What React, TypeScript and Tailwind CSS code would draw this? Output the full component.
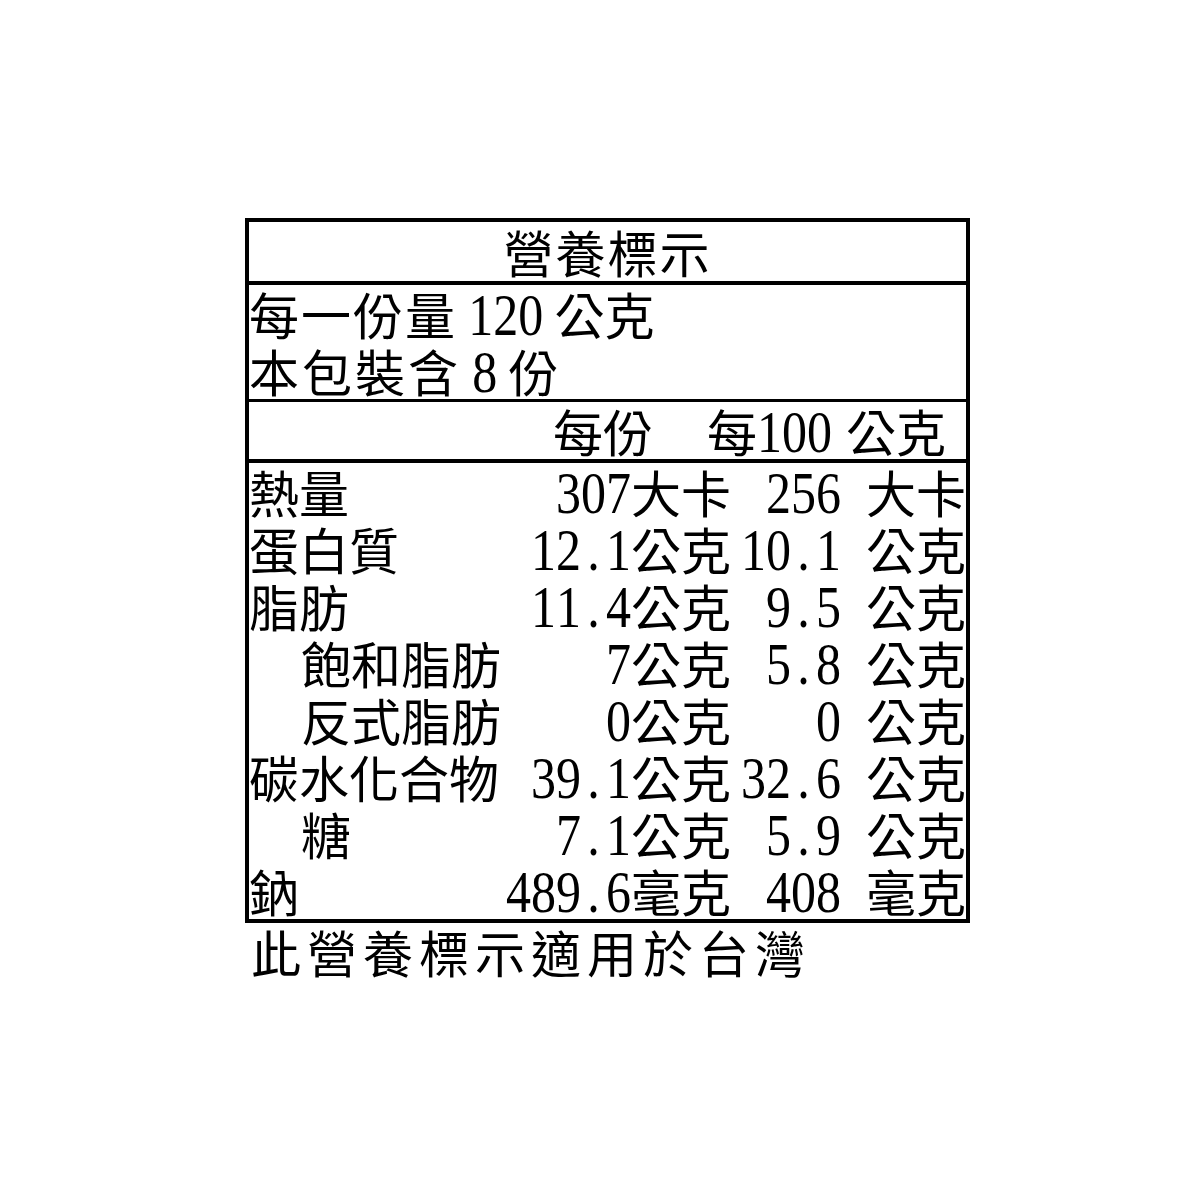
import React from "react";

const CJK = "font-['Noto_Sans_CJK_TC','Noto_Sans_CJK_SC',sans-serif]";

function Num({ v }: { v: string }) {
  return (
    <>
      {v.split("").map((c, i) => (
        <span
          key={i}
          className="inline-block w-[25px] text-center tracking-normal font-['Liberation_Serif',serif] text-[50px] leading-[40px] scale-y-[1.2] origin-[50%_37px]"
        >
          {c}
        </span>
      ))}
    </>
  );
}

function Val({ num, unit, gap }: { num: string; unit: string; gap?: boolean }) {
  return (
    <span className="whitespace-nowrap">
      <Num v={num} />
      {gap ? <span className="inline-block w-[25px]" /> : null}
      <span>{unit}</span>
    </span>
  );
}

const rows: { name: string; indent?: boolean; a: string; au: string; b: string; bu: string }[] = [
  { name: "熱量", a: "307", au: "大卡", b: "256", bu: "大卡" },
  { name: "蛋白質", a: "12.1", au: "公克", b: "10.1", bu: "公克" },
  { name: "脂肪", a: "11.4", au: "公克", b: "9.5", bu: "公克" },
  { name: "飽和脂肪", indent: true, a: "7", au: "公克", b: "5.8", bu: "公克" },
  { name: "反式脂肪", indent: true, a: "0", au: "公克", b: "0", bu: "公克" },
  { name: "碳水化合物", a: "39.1", au: "公克", b: "32.6", bu: "公克" },
  { name: "糖", indent: true, a: "7.1", au: "公克", b: "5.9", bu: "公克" },
  { name: "鈉", a: "489.6", au: "毫克", b: "408", bu: "毫克" },
];

export default function App() {
  return (
    <div className={`w-[1200px] h-[1200px] bg-white text-black pt-[218px] pl-[245px] ${CJK} text-[50px] font-normal`}>
      <div className="w-[725px] border-4 border-black">
        <div className="h-[63px] border-b-4 border-black text-center leading-[59px] tracking-[2px] whitespace-nowrap">
          營養標示
        </div>
        <div className="h-[117px] border-b-[3px] border-black leading-[57px] whitespace-nowrap">
          <div>
            <span className="tracking-[2px]">每一份量</span> <Num v="120" /> 公克
          </div>
          <div>
            <span className="tracking-[3px]">本包裝含</span> <Num v="8" /> 份
          </div>
        </div>
        <div className="h-[61px] border-b-4 border-black flex justify-end pr-[20px] leading-[57px] whitespace-nowrap">
          <span className="mr-[54px]">每份</span>
          <span>
            每<Num v="100" />
            <span className="inline-block w-[14px]" />
            公克
          </span>
        </div>
        <div>
          {rows.map((r) => (
            <div key={r.name} className="h-[57px] grid grid-cols-[251px_231px_235px] leading-[57px] whitespace-nowrap">
              <div className={r.indent ? "pl-[52px]" : ""}>{r.name}</div>
              <div className="text-right">
                <Val num={r.a} unit={r.au} />
              </div>
              <div className="text-right">
                <Val num={r.b} unit={r.bu} gap />
              </div>
            </div>
          ))}
        </div>
      </div>
      <div className="ml-[6px] leading-[57px] tracking-[6px] whitespace-nowrap">此營養標示適用於台灣</div>
    </div>
  );
}
